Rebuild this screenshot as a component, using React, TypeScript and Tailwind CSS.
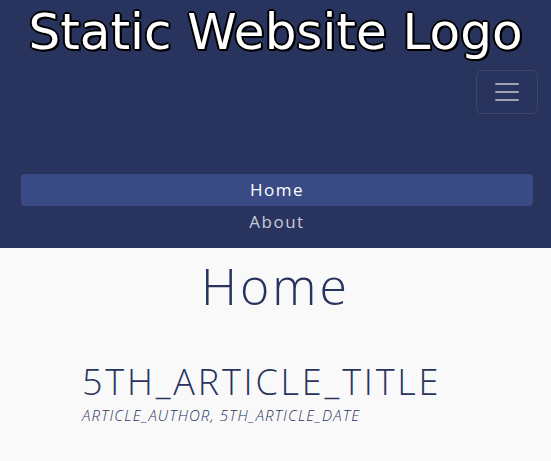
import React from 'react';

const navLinks = [
  { label: 'Home', active: true },
  { label: 'About', active: false },
];

const App: React.FC = () => {
  return (
    <div className="min-h-[461px] bg-[#f9f9f9] font-['Open_Sans',sans-serif]">
      <header className="bg-[#28345e] pb-[10px]">
        <h1 className="text-center font-['DejaVu_Sans',sans-serif] text-[50px] leading-[64px] text-white [text-shadow:-1px_-1px_0_#000,1px_-1px_0_#000,-1px_1px_0_#000,2px_2px_0_#000,0_2px_0_#000,2px_0_0_#000,-2px_0_0_#000,0_-2px_0_#000]">
          Static Website Logo
        </h1>
        <div className="flex justify-end pr-[13px] pt-[6px]">
          <button className="flex h-[44px] w-[62px] items-center justify-center rounded-md border border-white/10">
            <svg width="30" height="30" viewBox="0 0 30 30">
              <path d="M4 7h22M4 15h22M4 23h22" stroke="rgba(255,255,255,0.55)" strokeWidth="2" strokeLinecap="round" />
            </svg>
          </button>
        </div>
        <nav className="mt-[60px] flex flex-col px-[21px] pr-[18px]">
          {navLinks.map((link) => (
            <a
              key={link.label}
              href="#"
              className={`rounded h-[32px] flex items-center justify-center text-[17px] tracking-[1.5px] ${
                link.active ? 'bg-[#3a4a84] text-white' : 'text-white/75'
              }`}
            >
              {link.label}
            </a>
          ))}
        </nav>
      </header>
      <main>
        <h2 className="mt-[8px] text-center text-[50px] font-light leading-[60px] tracking-[3px] text-[#28345e]">Home</h2>
        <article className="mt-[44px] px-[82px]">
          <h3 className="text-[36px] font-light leading-[44px] text-[#28345e] tracking-[2.8px]">5TH_ARTICLE_TITLE</h3>
          <p className="text-[15px] font-light italic tracking-[1.1px] text-[#28345e]">ARTICLE_AUTHOR, 5TH_ARTICLE_DATE</p>
        </article>
      </main>
    </div>
  );
};

export default App;
